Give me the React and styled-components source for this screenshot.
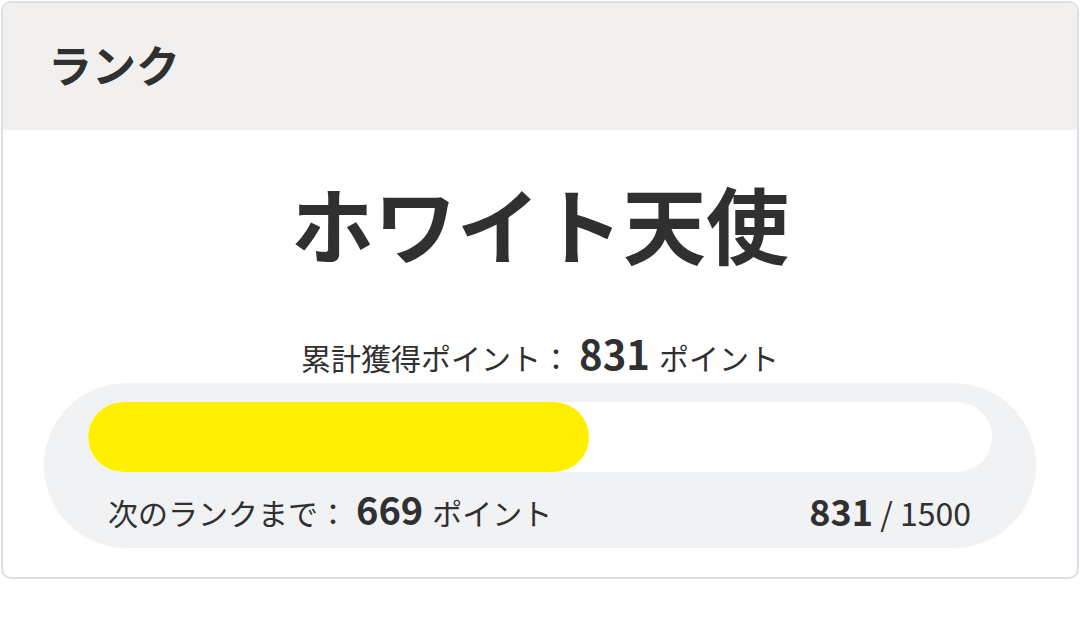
import React from "react";
import styled, { createGlobalStyle } from "styled-components";

const Global = createGlobalStyle`
  html, body { margin: 0; padding: 0; background: #fff; }
  body { font-family: "Noto Sans CJK JP", "Noto Sans", sans-serif; color: #303030; }
`;

const Wrap = styled.div`
  padding: 1px;
  width: 1080px;
  box-sizing: border-box;
`;

const Card = styled.section`
  border: 2px solid #dcdfe3;
  border-radius: 10px;
  overflow: hidden;
  background: #fff;
`;

const Header = styled.header`
  background: #f2f0ef;
  height: 127px;
  box-sizing: border-box;
  display: flex;
  align-items: center;
  padding: 0 45px 5px;
`;

const HeaderTitle = styled.h2`
  margin: 0;
  font-size: 44px;
  font-weight: 700;
  line-height: 1;
`;

const Body = styled.div`
  display: flex;
  flex-direction: column;
  align-items: center;
  padding: 32px 41px 29px;
`;

const RankName = styled.h1`
  margin: 0;
  font-size: 83px;
  font-weight: 700;
  line-height: 120px;
`;

const Total = styled.p`
  margin: 51px 0 6px;
  height: 44px;
  font-size: 30px;
  line-height: 44px;
`;

const Num = styled.strong`
  font-size: ${(p) => p.$size || 38}px;
  font-weight: 700;
  line-height: 1;
  margin: 0 9px 0 8px;
`;

const Panel = styled.div`
  align-self: stretch;
  background: #f1f2f4;
  border-radius: 83px;
  padding: 19px 44px 0;
  height: 165px;
  box-sizing: border-box;
`;

const Track = styled.div`
  height: 70px;
  background: #fff;
  border-radius: 35px;
  overflow: hidden;
`;

const Fill = styled.div`
  height: 100%;
  background: #fff000;
  border-radius: 35px;
`;

const Row = styled.div`
  display: flex;
  justify-content: space-between;
  align-items: center;
  padding: 4px 21px 0 20px;
  height: 76px;
  box-sizing: border-box;
  font-size: 30px;
  line-height: 44px;
`;

const Ratio = styled.span`
  font-size: 32px;
  strong { font-size: 36px; font-weight: 700; line-height: 1; }
`;

export default function App() {
  const current = 831;
  const max = 1500;
  return (
    <>
      <Global />
      <Wrap>
        <Card>
          <Header>
            <HeaderTitle>ランク</HeaderTitle>
          </Header>
          <Body>
            <RankName>ホワイト天使</RankName>
            <Total>
              累計獲得ポイント：<Num $size={40}>{current}</Num>ポイント
            </Total>
            <Panel>
              <Track>
                <Fill style={{ width: `${(current / max) * 100}%` }} />
              </Track>
              <Row>
                <span>
                  次のランクまで：<Num $size={38}>{max - current}</Num>ポイント
                </span>
                <Ratio>
                  <strong>{current}</strong> / {max}
                </Ratio>
              </Row>
            </Panel>
          </Body>
        </Card>
      </Wrap>
    </>
  );
}
